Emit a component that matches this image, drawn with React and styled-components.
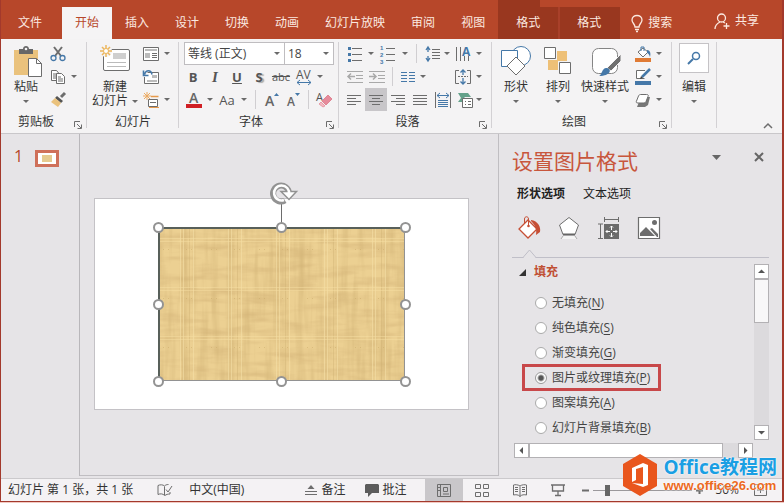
import React, { useState } from "react";
import styled, { createGlobalStyle, css } from "styled-components";

const RED = "#b7472a";
const GREY = "#6d6d6d";
const BLUE = "#4578a8";

const Global = createGlobalStyle`
  *, *::before, *::after { box-sizing: border-box; }
  body {
    margin: 0;
    background: #f3c9c2;
    color: #333;
    font: 12px/16px "Open Sans", "Noto Sans CJK SC", sans-serif;
  }
  button, select, input { font: inherit; color: inherit; margin: 0; }
  button { background: none; border: 0; padding: 0; }
  svg { display: block; flex: none; overflow: visible; }
`;

const Window = styled.div`
  display: flex;
  flex-direction: column;
  min-height: calc(100vh - 1px);
  border: solid #a3392c;
  border-width: 0 2px 1px 1px;
  background: #e6e4e7;
  position: relative;
`;

/* ---------- tab strip ---------- */
const TabBar = styled.nav`
  display: flex;
  align-items: flex-end;
  height: 39px;
  background: ${RED};
  color: #fbe9e0;
`;
const Tab = styled.button`
  height: 32px;
  padding: 0 13px;
  flex: none;
  ${(p) => p.$file && css`padding: 0 20px 0 17px;`}
  ${(p) => p.$active && css`background: #f5f4f5; color: ${RED};`}
`;
const ContextTab = styled.button`
  height: 32px;
  width: ${(p) => p.$w}px;
  background: #99371f;
  border-right: 2px solid ${(p) => (p.$last ? "#99371f" : "#a9402a")};
`;
const ContextGroup = styled.div`
  height: 39px;
  display: flex;
  align-items: flex-end;
  background: linear-gradient(#99371f, #99371f) 0 0 / 42px 7px no-repeat;
`;
const BarAction = styled.button`
  display: flex;
  align-items: center;
  gap: 5px;
  height: 32px;
  margin-left: ${(p) => (p.$end ? "auto" : "11px")};
  margin-right: ${(p) => (p.$end ? "23px" : "0")};
  margin-bottom: ${(p) => (p.$end ? "2px" : "0")};
`;

/* ---------- ribbon ---------- */
const Ribbon = styled.div`
  display: flex;
  background: #f4f3f4;
  border-bottom: 1px solid #c9c7ca;
  height: 95px;
  padding-top: 3px;
`;
const Group = styled.section`
  flex: none;
  width: ${(p) => p.$w}px;
  display: flex;
  flex-direction: column;
  position: relative;
  &::after {
    content: "";
    position: absolute;
    right: 0;
    top: 0;
    height: 86px;
    border-right: 1px solid #d3d1d4;
  }
`;
const GroupBody = styled.div`
  display: flex;
  height: 69px;
  padding-left: ${(p) => p.$pad}px;
`;
const Caption = styled.div`
  display: flex;
  align-items: center;
  height: 24px;
  span { flex: 1; text-align: center; }
`;
const Launcher = styled.button`
  width: 16px;
  height: 16px;
  padding: 5px 0 0 3px;
`;
const Stack = styled.div`
  display: flex;
  flex-direction: column;
`;
const Line = styled.div`
  display: flex;
  align-items: center;
  height: 23px;
`;
const ToolButton = styled.button`
  display: flex;
  align-items: center;
  height: 23px;
  background: ${(p) => (p.$on ? "#c8c6c9" : "transparent")};
`;
const Slot = styled.span`
  width: ${(p) => p.$w}px;
  display: flex;
  justify-content: center;
  color: #555;
`;
const CaretSlot = styled.span`
  width: 8px;
  display: flex;
  justify-content: center;
`;
const BigButton = styled.button`
  width: ${(p) => p.$w}px;
  display: flex;
  flex-direction: column;
  align-items: center;
  padding-top: 3px;
  line-height: 14px;
  white-space: nowrap;
`;
const BigIcon = styled.span`
  height: 35px;
`;
const BigCaption = styled.span`
  display: flex;
  align-items: center;
  justify-content: center;
  gap: 4px;
  height: 14px;
`;
const Divider = styled.span`
  width: ${(p) => p.$w}px;
  height: 19px;
  background: ${(p) =>
    p.$blank ? "none" : "linear-gradient(#d0ced1, #d0ced1) center / 1px 100% no-repeat"};
`;
const Combos = styled.div`
  display: flex;
  height: 23px;
  margin-left: 2px;
`;
const ComboBox = styled.label`
  position: relative;
  width: ${(p) => p.$w}px;
  margin-right: -1px;
  svg { position: absolute; right: 5px; top: 10px; pointer-events: none; }
  select {
    appearance: none;
    width: 100%;
    height: 23px;
    padding: 0 3px;
    border: 1px solid #bfbdc0;
    border-radius: 0;
    background: #fff;
    color: #444;
  }
`;
const Glyph = styled.span`
  font: ${(p) => (p.$italic ? "italic " : "")}${(p) => (p.$light ? 400 : 700)} 13px/16px "Open Sans", sans-serif;
  color: #555;
  ${(p) => p.$italic && css`font-family: "Liberation Serif", serif; font-size: 15px;`}
  ${(p) => p.$u && css`text-decoration: underline;`}
  ${(p) => p.$shadow && css`text-shadow: 2px 1px 1px #aaa;`}
  ${(p) => p.$strike && css`font-size: 11px; font-weight: 400; text-decoration: line-through;`}
`;
const SearchTile = styled.span`
  width: 30px;
  height: 30px;
  margin: -2px 0 0;
  background: #fff;
  border: 1px solid #c5c3c6;
  display: flex;
  align-items: center;
  justify-content: center;
`;
const Collapse = styled.button`
  margin: auto 9px 4px auto;
`;

/* ---------- work area ---------- */
const Work = styled.main`
  flex: 1;
  display: flex;
  padding-bottom: 2px;
`;
const Thumbs = styled.aside`
  width: 79px;
  padding: 14px 0 0 13px;
  border-right: 1px solid #b9b7bb;
  display: flex;
  align-items: flex-start;
  gap: 12px;
  color: ${RED};
  font-size: 16px;
`;
const Thumb = styled.button`
  width: 24px;
  height: 17px;
  margin-top: 2px;
  border: 3px solid #cf705a;
  background: linear-gradient(#e6cb90, #e6cb90) center / 10px 7px no-repeat #fff;
`;
const Canvas = styled.div`
  flex: 1;
  padding: 64px 29px 0 14px;
  border: solid #c0bec2;
  border-width: 0 1px 1px 0;
`;
const Slide = styled.div`
  position: relative;
  aspect-ratio: 375 / 212;
  background: #fff;
  border: 1px solid #c4c2c6;
`;
const Shape = styled.div`
  position: absolute;
  left: 16.8%;
  top: 13.2%;
  width: 66.4%;
  height: 73.6%;
  > svg { width: 100%; height: 100%; overflow: hidden; }
`;
const Frame = styled.span`
  position: absolute;
  inset: 0;
  border: solid;
  border-width: 2px 1px 1px 2px;
  border-color: #58605a #929292 #929292 #58605a;
`;
const Handle = styled.span`
  position: absolute;
  left: ${(p) => p.$x}%;
  top: ${(p) => p.$y}%;
  width: 11px;
  height: 11px;
  margin: -5px 0 0 -5px;
  border: 2px solid #939393;
  border-radius: 50%;
  background: #fff;
`;
const Rotator = styled.span`
  position: absolute;
  left: 50%;
  bottom: 100%;
  margin-left: -12px;
`;

/* ---------- format pane ---------- */
const Pane = styled.aside`
  width: 283px;
  display: flex;
  flex-direction: column;
  padding: 11px 13px 0 13px;
`;
const PaneHead = styled.header`
  display: flex;
  align-items: center;
  height: 32px;
  h2 { margin: 0; flex: 1; font-weight: 400; font-size: 21px; line-height: 32px; color: #c8563c; }
`;
const PaneTools = styled.div`
  display: flex;
  align-items: center;
  gap: 33px;
  padding: 0 5px 8px 0;
`;
const PaneTabs = styled.div`
  display: flex;
  gap: 18px;
  padding: 9px 0 0 5px;
`;
const PaneTab = styled.button`
  line-height: 16px;
  color: #222;
  font-weight: ${(p) => (p.$on ? 700 : 400)};
`;
const IconTabs = styled.div`
  display: flex;
  gap: 16px;
  padding: 14px 0 0 5px;
`;
const CaretLine = styled.div`
  height: 18px;
  padding: 9px 0 0 10px;
  margin-bottom: 6px;
  background: linear-gradient(#c0bfc8, #c0bfc8) bottom / 100% 1px no-repeat;
`;
const PaneScroll = styled.div`
  display: grid;
  grid-template-columns: 1fr 15px;
  row-gap: 3px;
`;
const Options = styled.div`
  height: 176px;
  overflow: hidden;
`;
const SectionTitle = styled.button`
  display: flex;
  align-items: center;
  gap: 8px;
  height: 16px;
  margin: 0 0 10px 7px;
  color: #c04f34;
  font-weight: 700;
`;
const Option = styled.label`
  display: flex;
  align-items: center;
  gap: 5px;
  width: max-content;
  height: 25px;
  padding: 0 10px 0 20px;
  margin-left: 3px;
  color: #444;
  ${(p) => p.$marked && css`
    height: 27px;
    margin: -1px 0 -1px 10px;
    padding: 0 8px 0 10px;
    border: 3px solid #c8484a;
  `}
  u { text-underline-offset: 2px; }
`;
const Radio = styled.input`
  appearance: none;
  width: 12px;
  height: 12px;
  border: 1px solid #aaa;
  border-radius: 50%;
  background: #fff;
  &:checked { background: radial-gradient(circle, #555 0 2px, #fff 4px); border-color: #999; }
`;
const Scrollbar = styled.div`
  display: flex;
  flex-direction: ${(p) => (p.$row ? "row" : "column")};
  background: #dcdadd;
  ${(p) => p.$row && css`margin: 0 1px 0 2px;`}
`;
const ScrollButton = styled.button`
  flex: none;
  width: 15px;
  height: 15px;
  display: flex;
  align-items: center;
  justify-content: center;
  background: #fff;
  border: 1px solid #b3b1b4;
`;
const ScrollThumb = styled.span`
  ${(p) => (p.$row ? css`width: 81%; height: 15px; background: #fff;` : css`height: 44px; background: #f8f7f8;`)}
  border: 1px solid #b3b1b4;
  margin-right: ${(p) => (p.$row ? "auto" : "0")};
  margin-bottom: ${(p) => (p.$row ? "0" : "auto")};
`;

/* ---------- status bar ---------- */
const Status = styled.footer`
  display: flex;
  align-items: center;
  height: 23px;
  background: #f4f2f4;
  border-top: 1px solid #cbc9cc;
  padding-left: 7px;
  color: #333;
  white-space: nowrap;
`;
const StatusButton = styled.button`
  flex: none;
  display: flex;
  align-items: center;
  gap: ${(p) => p.$gap || 4}px;
  margin-left: ${(p) => p.$ml || 0}px;
`;
const Views = styled.div`
  flex: none;
  display: flex;
  margin-left: 19px;
`;
const ViewButton = styled.button`
  width: 38px;
  height: 22px;
  display: flex;
  align-items: center;
  justify-content: center;
  background: ${(p) => (p.$on ? "#c9c7ca" : "transparent")};
`;
const Range = styled.input`
  appearance: none;
  flex: 1;
  min-width: 40px;
  width: 0;
  height: 12px;
  margin: 0 4px;
  background: linear-gradient(#9b999c, #9b999c) center / 100% 1px no-repeat;
  &::-webkit-slider-thumb { appearance: none; width: 5px; height: 11px; background: #666; }
`;
const Zoom = styled.div`
  flex: 1;
  display: flex;
  align-items: center;
  padding: 0 15px 0 5px;
`;
const Badge = styled.a`
  position: absolute;
  right: 5px;
  bottom: 4px;
  display: flex;
  align-items: center;
  gap: 5px;
  text-decoration: none;
`;
const BadgeText = styled.span`
  display: flex;
  flex-direction: column;
  font-weight: 700;
  text-shadow: 0 0 2px #fff, 0 0 1px #fff;
  white-space: nowrap;
`;
const BadgeName = styled.span`
  font-size: 19px;
  line-height: 22px;
  color: #1b9fe3;
`;
const BadgeUrl = styled.span`
  font: 700 13px/16px "Liberation Sans", sans-serif;
  color: #ec6a1e;
`;

/* ---------- icons ---------- */
const Svg = ({ w = 16, h = 16, children, ...r }) => (
  <svg width={w} height={h} viewBox={`0 0 ${w} ${h}`} fill="none" stroke={GREY} aria-hidden="true" {...r}>
    {children}
  </svg>
);
const Caret = () => <Svg w={6} h={3}><path d="M0 0h6L3 3z" fill="#6a6a6a" stroke="none" /></Svg>;
const Tri = ({ dir }) => {
  const d = { up: "M1 6h7L4.500 2.500z", down: "M1 3h7L4.500 6.500z", left: "M6 1v7L2.500 4.500z", right: "M3 1v7L6.500 4.500z" };
  return <Svg w={9} h={9}><path d={d[dir]} fill="#555" stroke="none" /></Svg>;
};
const LaunchIcon = () => <Svg w={8} h={8}><path d="M.5 6V.5H6M3 3l4 4M7.500 3.500v4h-4" /></Svg>;

const PasteIcon = () => (
  <Svg w={32} h={32}>
    <path d="M4 5h24v25H4z" fill="#eac27d" stroke="none" />
    <path d="M9 4h4c0-4 6-4 6 0h4v5H9z" fill="#676767" stroke="none" />
    <circle cx="16" cy="4" r="1.300" fill="#f4f3f4" stroke="none" />
    <path d="M18.500 13.500h8l5 5v13h-13z" fill="#fff" />
    <path d="M26.500 13.500v5h5" />
  </Svg>
);
const CutIcon = () => (
  <Svg>
    <path d="M4 1l7 9M12 1L5 10" strokeWidth="2" />
    <circle cx="3.500" cy="12" r="2.500" stroke={BLUE} strokeWidth="1.300" />
    <circle cx="12.500" cy="12" r="2.500" stroke={BLUE} strokeWidth="1.300" />
  </Svg>
);
const CopyIcon = () => (
  <Svg>
    <path d="M1.500 1.500h5l2.500 3v7H1.500zM3 5h4M3 7h3M3 9h3" fill="#fff" />
    <path d="M6.500 4.500h5l3 3v7h-8zM8 8h3M8 10h5M8 12h5" fill="#fff" />
  </Svg>
);
const BrushIcon = () => (
  <Svg>
    <path d="M15 1l-4 4" strokeWidth="3" />
    <path d="M7 4l6 5-2 2-6-5z" fill="#555" stroke="none" />
    <path d="M5 6l6 5-3 4-7-5z" fill="#eac27d" stroke="none" />
  </Svg>
);
const NewSlideIcon = () => (
  <Svg w={32} h={32}>
    <rect x="4.500" y="4.500" width="26" height="21" rx="1.500" fill="#fff" />
    <path d="M14 8h13v6H14z" fill="#cfcfcf" stroke="none" />
    <path d="M8 17.500h19M8 21.500h19" stroke="#bbb" />
    <circle cx="7" cy="6" r="6" fill="#f4f3f4" stroke="none" />
    <path d="M7 0v12M1 6h12M3 2l8 8M11 2l-8 8" stroke="#ecb65c" strokeWidth="1.500" />
    <circle cx="7" cy="6" r="2.500" fill="#fff" stroke="#ecb65c" />
  </Svg>
);
const LayoutIcon = () => (
  <Svg>
    <path d="M.5 1.500h15v13H.5z" fill="#fff" />
    <path d="M2 3h12v2H2zM2 7h5v5H2z" fill="#bbb" stroke="none" />
    <path d="M9 7.500h5M9 9.500h5M9 11.500h5" />
  </Svg>
);
const ResetIcon = () => (
  <Svg>
    <path d="M4.500 3.500h11v11h-14V8" fill="#fff" />
    <path d="M9 6h5v3H9zM4 11h10v2H4z" fill="#bbb" stroke="none" />
    <path d="M1.500 5.500C3 .5 8 .5 9 5.500M.5 1.500v5h5" stroke={BLUE} strokeWidth="1.600" />
  </Svg>
);
const SectionIcon = () => (
  <Svg>
    <path d="M8 4.500h7.500" stroke="#e79a4c" strokeWidth="1.500" />
    <path d="M5.500 7.500h9v7h-9zM7 10.500h6" fill="#fff" />
    <path d="M4 0v8M0 4h8M1 1l6 6M7 1L1 7" stroke="#eba960" />
    <path d="M6 15.500h10" stroke="#e79a4c" />
  </Svg>
);
const SpacingIcon = () => (
  <Svg w={16} h={18}>
    <text x="0" y="11" fontSize="12" fill="#555" stroke="none" fontFamily="Open Sans">AV</text>
    <path d="M1 14.500h14M4 12l-3 2.500 3 2.500M12 12l3 2.500-3 2.500" stroke={BLUE} />
  </Svg>
);
const FontColorIcon = () => (
  <Svg w={16} h={18}>
    <text x="3" y="12" fontSize="14" fontWeight="600" fill="#666" stroke="none" fontFamily="Open Sans">A</text>
    <path d="M0 13h16v4H0z" fill="#d01f24" stroke="none" />
  </Svg>
);
const GrowIcon = ({ down }) => (
  <Svg w={16} h={18}>
    <text x={down ? 2 : 1} y="15" fontSize={down ? 12 : 14} fontWeight="600" fill="#666" stroke="none" fontFamily="Open Sans">A</text>
    <path d={down ? "M10 2h5l-2.500 3z" : "M10 5h5l-2.500-3z"} fill={BLUE} stroke="none" />
  </Svg>
);
const ClearIcon = () => (
  <Svg w={16} h={18}>
    <text x="0" y="10" fontSize="11" fill="#555" stroke="none" fontFamily="Open Sans">A</text>
    <path d="M12 4l4 4-6 6-4-4z" fill="#e68b9b" stroke="#e08594" />
    <path d="M5 11l4 4-2 1-4-3z" fill="#f5b9c2" stroke="#e08594" strokeWidth=".7" />
  </Svg>
);
const BulletIcon = () => (
  <Svg>
    <path d="M5 2.500h10M5 8.500h10M5 14.500h10" />
    <path d="M1 1h3v3H1zM1 7h3v3H1zM1 13h3v3H1z" fill={BLUE} stroke="none" />
  </Svg>
);
const NumberIcon = () => (
  <Svg>
    <path d="M6 2.500h9M6 8.500h9M6 14.500h9" />
    <g fill={BLUE} stroke="none" fontSize="6" fontWeight="700" fontFamily="Liberation Sans">
      <text x="0" y="4">1</text><text x="0" y="11">2</text><text x="0" y="18">3</text>
    </g>
  </Svg>
);
const LineSpaceIcon = () => (
  <Svg>
    <path d="M7 3.500h8M7 6.500h8M7 9.500h8M7 12.500h8" />
    <path d="M3 1v5M1 4l2-3 2 3M3 10v5M1 12l2 3 2-3" stroke={BLUE} strokeWidth="1.300" />
  </Svg>
);
const TextDirIcon = () => (
  <Svg>
    <path d="M1.500 1v14M5.500 1v14M9.500 10v5M13.500 10v5" />
    <text x="7" y="10" fontSize="12" fontWeight="700" fill={BLUE} stroke="none" fontFamily="Open Sans">A</text>
  </Svg>
);
const AlignTextIcon = () => (
  <Svg>
    <path d="M4 1.500H.5v13H4M12 1.500h3.500v13H12" />
    <path d="M3 7.500h10" strokeDasharray="2 1" />
    <path d="M8 1v5M5.500 3.500L8 1l2.500 2.500M8 9v6M5.500 12.500L8 15l2.500-2.500" stroke={BLUE} strokeWidth="1.300" />
  </Svg>
);
const IndentIcon = ({ inc }) => (
  <Svg stroke="#a9a9a9">
    <path d="M0 2.500h16M9 6.500h7M9 9.500h7M0 13.500h16" />
    <path d={inc ? "M0 7.500h7M4 4.500l3 3-3 3" : "M8 7.500H1M4 4.500l-3 3 3 3"} strokeWidth="1.500" />
  </Svg>
);
const ColumnsIcon = () => (
  <Svg w={14} h={14} stroke={BLUE}>
    <path d="M0 2.500h6M8 2.500h6M0 5.500h6M8 5.500h6M0 8.500h6M8 8.500h6M0 11.500h6M8 11.500h6" />
  </Svg>
);
const ALIGN = {
  left: "M1 6.500h9M1 12.500h9",
  center: "M4 6.500h8M4 12.500h8",
  right: "M6 6.500h9M6 12.500h9",
  full: "M1 6.500h14M1 12.500h14",
};
const AlignIcon = ({ kind }) => <Svg><path d={`M1 3.500h14M1 9.500h14${ALIGN[kind]}`} /></Svg>;
const DistributeIcon = () => (
  <Svg w={16} h={18}>
    <path d="M.5 1v16M15.500 1v16" />
    <path d="M2 4.500h12M5 2L2 4.500 5 7M11 2l3 2.500L11 7" stroke={BLUE} />
    <path d="M3 9.500h10M3 11.500h10M3 13.500h10M3 15.500h10" stroke={BLUE} />
  </Svg>
);
const SmartArtIcon = () => (
  <Svg w={17} h={18}>
    <path d="M1 2h10l3 4H8L6 8v3H1l3-4z" fill="#64a28b" stroke="none" />
    <path d="M5.500 7.500h10v9h-10zM8 10.500h1M11 10.500h3M8 13.500h1M11 13.500h3" fill="#fff" />
  </Svg>
);
const ShapesIcon = () => (
  <Svg w={32} h={32} stroke={BLUE}>
    <circle cx="21" cy="11" r="9.500" fill="#fff" />
    <path d="M1.500 5.500h16v16h-16z" fill="#fff" />
    <path d="M16 12l9 9-9 9-9-9z" fill="#fff" stroke={GREY} />
  </Svg>
);
const ArrangeIcon = () => (
  <Svg w={32} h={32}>
    <path d="M15 6h10v10H15zM6 15h10v10H6z" fill="#eec077" stroke="none" />
    <path d="M2.500 2.500h11v11h-11zM17.500 17.500h11v11h-11z" fill="#fff" />
  </Svg>
);
const StylesIcon = () => (
  <Svg w={32} h={32}>
    <rect x="3.500" y="3.500" width="25" height="25" rx="6" fill="#fff" stroke="#858585" />
    <path d="M32 9v7L22 26l-4-3z" fill="#6f6f6f" stroke="#f4f3f4" />
    <path d="M10 31c3-1 3-9 8-8s4 8-8 8z" fill={BLUE} stroke="none" />
  </Svg>
);
const FillIcon = () => (
  <Svg>
    <path d="M8 2l5 4-5 5-5-5z" fill="#fff" />
    <path d="M6 5V1h3v4" stroke={BLUE} />
    <path d="M12 4c3 0 4 3 3 7-1-3-2-4-3-4z" fill={BLUE} stroke="none" />
    <path d="M0 12h16v4H0z" fill="#e07b35" stroke="none" />
  </Svg>
);
const OutlineIcon = () => (
  <Svg>
    <path d="M10 1.500H1.500v8h8" fill="#fff" />
    <path d="M15 0l-8 8" stroke={BLUE} strokeWidth="2.500" />
    <path d="M5 10l1-3 2 2z" fill="#444" stroke="none" />
    <path d="M0 12h16v4H0z" fill={BLUE} stroke="none" />
  </Svg>
);
const EffectIcon = () => (
  <Svg>
    <path d="M6 5h9l-2 8-3 2H2z" fill="#777" stroke="none" />
    <path d="M5.500 2.500h6c2 0 2 1 1.500 2l-2 5c-.5 1-1 1.500-2 1.500H3C1 11 1 10 1.500 9l2-5c.5-1 1-1.500 2-1.500z" fill="#fff" />
  </Svg>
);
const SearchIcon = () => (
  <Svg w={14} h={14} stroke={BLUE}><circle cx="9" cy="5" r="3.500" strokeWidth="1.500" /><path d="M6 8l-5 5" strokeWidth="2" /></Svg>
);
const BulbIcon = () => (
  <Svg w={12} h={17} stroke="#fbe9e0">
    <path d="M4 12c0-3-3-4-3-7 0-6 10-6 10 0 0 3-3 4-3 7zM4 14.500h4M5 16.500h2" strokeWidth="1.300" />
  </Svg>
);
const ShareIcon = () => (
  <Svg w={16} h={17} stroke="#fbe9e0" strokeWidth="1.300">
    <circle cx="7.500" cy="5" r="4" /><path d="M1 16c0-4 3-6 5-7M9 9l2 1M12.500 10v6M9.500 13h6" />
  </Svg>
);
const PaneFill = () => (
  <Svg w={24} h={24}>
    <path d="M11 4l9 9-9 9-9-9z" fill="#fff" stroke="#c64f35" strokeWidth="1.300" />
    <path d="M7.500 8V3c0-3 4-3 4 0v7" stroke="#c64f35" />
    <circle cx="11.500" cy="10" r="1.300" fill="#c64f35" stroke="none" />
    <path d="M14 4c7 1 10 7 9 12l-4 3c1-6-1-10-5-14z" fill="#c64f35" stroke="none" />
  </Svg>
);
const PaneEffects = () => (
  <Svg w={24} h={24}>
    <path d="M12 1.500l9.500 7.500L18 18.500H6L2.500 9z" fill="#fff" />
    <path d="M6 18.500h12" stroke="#666" strokeWidth="2" />
    <path d="M6 20l-2 3h16l-2-3z" fill="#f4f4f4" stroke="none" />
    <path d="M6 20l-2 3M18 20l2 3" stroke="#aaa" />
  </Svg>
);
const PaneSize = () => (
  <Svg w={24} h={24}>
    <path d="M7 8h15v15H7z" fill="#6b6b6b" stroke="none" />
    <path d="M7.500 3.500h14M7.500 1v5M21.500 1v5M3.500 8v14.500M1 8h5M1 22.500h5" />
    <path d="M14.500 10v4M14.500 17v4M9 15.500h4M16 15.500h4M13 11.500l1.500-1.500 1.500 1.500M13 19.500l1.500 1.500 1.500-1.500M10.500 14L9 15.500l1.500 1.500M18.500 14l1.500 1.500-1.500 1.500" stroke="#fff" />
  </Svg>
);
const PanePicture = () => (
  <Svg w={24} h={24}>
    <path d="M1.500 1.500h21v21h-21z" fill="#fff" strokeWidth="1.200" />
    <circle cx="17.500" cy="6.500" r="2.500" fill={GREY} stroke="none" />
    <path d="M3 20v-3l6-6 9 9zM13 13l2-1 6 6v3h-1z" fill={GREY} stroke="none" />
  </Svg>
);

/* Woven papyrus fill: a repeating 48px tile of faint crossing fibres on tan. */
const Papyrus = () => (
  <svg aria-hidden="true">
    <defs>
      <filter id="warp" x="0" y="0" width="100%" height="100%" colorInterpolationFilters="sRGB">
        <feTurbulence type="fractalNoise" baseFrequency="0.13 0.012" numOctaves="3" seed="4" />
        <feColorMatrix values="0 0 0 0 0.82  0 0 0 0 0.7  0 0 0 0 0.46  1.400 0 0 0 -0.580" />
      </filter>
      <filter id="weft" x="0" y="0" width="100%" height="100%" colorInterpolationFilters="sRGB">
        <feTurbulence type="fractalNoise" baseFrequency="0.025 0.13" numOctaves="3" seed="9" />
        <feColorMatrix values="0 0 0 0 0.82  0 0 0 0 0.69  0 0 0 0 0.46  1.200 0 0 0 -0.500" />
      </filter>
      <pattern id="weave" width="48" height="49" patternUnits="userSpaceOnUse">
        <path d="M22.500 0v49M25.500 0v49M35.500 0v49" stroke="#f5dfa6" strokeOpacity=".6" />
        <path d="M31.500 0v49" stroke="#cdae70" strokeOpacity=".4" />
        <path d="M0 11.500h48M0 14.500h48" stroke="#f5dda2" strokeOpacity=".5" />
        <path d="M5 22.500h9M28 22.500h10" stroke="#c9a968" strokeOpacity=".5" strokeDasharray="1 4" />
      </pattern>
    </defs>
    <rect width="100%" height="100%" fill="#ecd092" />
    <rect width="100%" height="100%" filter="url(#weft)" />
    <rect width="100%" height="100%" filter="url(#warp)" />
    <rect width="100%" height="100%" fill="url(#weave)" />
  </svg>
);

/* ---------- composed controls ---------- */
const Tool = ({ label, w, caret, on, children }) => (
  <ToolButton type="button" aria-label={label} $on={on}>
    <Slot $w={w}>{children}</Slot>
    {caret && <CaretSlot><Caret /></CaretSlot>}
  </ToolButton>
);
const RibbonGroup = ({ w, pad, title, launcher, children }) => (
  <Group $w={w}>
    <GroupBody $pad={pad}>{children}</GroupBody>
    {title && (
      <Caption>
        <span>{title}</span>
        {launcher && <Launcher type="button" aria-label={`${title}设置`}><LaunchIcon /></Launcher>}
      </Caption>
    )}
  </Group>
);
const Big = ({ w, icon, label, second }) => (
  <BigButton type="button" $w={w}>
    <BigIcon>{icon}</BigIcon>
    <span>{label}</span>
    <BigCaption>{second}<Caret /></BigCaption>
  </BigButton>
);

const TABS = ["文件", "开始", "插入", "设计", "切换", "动画", "幻灯片放映", "审阅", "视图"];
const FILLS = [
  ["无填充", "N"], ["纯色填充", "S"], ["渐变填充", "G"],
  ["图片或纹理填充", "P"], ["图案填充", "A"], ["幻灯片背景填充", "B"],
];
const HANDLES = [[0, 0], [50, 0], [100, 0], [0, 50], [100, 50], [0, 100], [50, 100], [100, 100]];

export default function App() {
  const [fill, setFill] = useState("P");
  const [zoom, setZoom] = useState(12);
  return (
    <>
      <Global />
      <Window>
        <TabBar>
          {TABS.map((t, i) => <Tab key={t} type="button" $file={i === 0} $active={i === 1}>{t}</Tab>)}
          <ContextGroup>
            <ContextTab type="button" $w={62}>格式</ContextTab>
            <ContextTab type="button" $w={60} $last>格式</ContextTab>
          </ContextGroup>
          <BarAction type="button"><BulbIcon />搜索</BarAction>
          <BarAction type="button" $end><ShareIcon />共享</BarAction>
        </TabBar>

        <Ribbon>
          <RibbonGroup w={86} pad={5} title="剪贴板" launcher>
            <Big w={40} icon={<PasteIcon />} label="粘贴" />
            <Stack>
              <Tool label="剪切" w={24}><CutIcon /></Tool>
              <Tool label="复制" w={24} caret><CopyIcon /></Tool>
              <Tool label="格式刷" w={24}><BrushIcon /></Tool>
            </Stack>
          </RibbonGroup>

          <RibbonGroup w={92} pad={4} title="幻灯片">
            <Big w={48} icon={<NewSlideIcon />} label="新建" second="幻灯片" />
            <Stack>
              <Tool label="版式" w={24} caret><LayoutIcon /></Tool>
              <Tool label="重置" w={24}><ResetIcon /></Tool>
              <Tool label="节" w={24} caret><SectionIcon /></Tool>
            </Stack>
          </RibbonGroup>

          <RibbonGroup w={160} pad={3} title="字体" launcher>
            <Stack>
              <Combos>
                <ComboBox $w={101}><select aria-label="字体"><option>等线 (正文)</option></select><Caret /></ComboBox>
                <ComboBox $w={50}><select aria-label="字号"><option>18</option></select><Caret /></ComboBox>
              </Combos>
              <Line>
                <Tool label="加粗" w={22}><Glyph>B</Glyph></Tool>
                <Tool label="倾斜" w={22}><Glyph $italic>I</Glyph></Tool>
                <Tool label="下划线" w={22}><Glyph $u>U</Glyph></Tool>
                <Tool label="阴影" w={22}><Glyph $shadow>S</Glyph></Tool>
                <Tool label="删除线" w={22}><Glyph $strike>abc</Glyph></Tool>
                <Tool label="字符间距" w={24} caret><SpacingIcon /></Tool>
              </Line>
              <Line>
                <Tool label="字体颜色" w={24} caret><FontColorIcon /></Tool>
                <Tool label="更改大小写" w={26} caret><Glyph $light>Aa</Glyph></Tool>
                <Divider $w={15} />
                <Tool label="增大字号" w={18}><GrowIcon /></Tool>
                <Tool label="减小字号" w={24}><GrowIcon down /></Tool>
                <Divider $w={6} />
                <Tool label="清除格式" w={26}><ClearIcon /></Tool>
              </Line>
            </Stack>
          </RibbonGroup>

          <RibbonGroup w={153} pad={4} title="段落" launcher>
            <Stack>
              <Line>
                <Tool label="项目符号" w={24} caret><BulletIcon /></Tool>
                <Tool label="编号" w={26} caret><NumberIcon /></Tool>
                <Divider $w={14} />
                <Tool label="行距" w={20} caret><LineSpaceIcon /></Tool>
                <Tool label="文字方向" w={24} caret><TextDirIcon /></Tool>
              </Line>
              <Line>
                <Tool label="降低列表级别" w={24}><IndentIcon /></Tool>
                <Tool label="提高列表级别" w={20}><IndentIcon inc /></Tool>
                <Divider $w={10} />
                <Tool label="分栏" w={22} caret><ColumnsIcon /></Tool>
                <Divider $w={24} $blank />
                <Tool label="对齐文本" w={24} caret><AlignTextIcon /></Tool>
              </Line>
              <Line>
                <Tool label="左对齐" w={22}><AlignIcon kind="left" /></Tool>
                <Tool label="居中" w={22} on><AlignIcon kind="center" /></Tool>
                <Tool label="右对齐" w={22}><AlignIcon kind="right" /></Tool>
                <Tool label="两端对齐" w={22}><AlignIcon kind="full" /></Tool>
                <Tool label="分散对齐" w={24}><DistributeIcon /></Tool>
                <Tool label="转换为 SmartArt" w={20} caret><SmartArtIcon /></Tool>
              </Line>
            </Stack>
          </RibbonGroup>

          <RibbonGroup w={180} pad={3} title="绘图" launcher>
            <Big w={42} icon={<ShapesIcon />} label="形状" />
            <Big w={42} icon={<ArrangeIcon />} label="排列" />
            <Big w={52} icon={<StylesIcon />} label="快速样式" />
            <Stack>
              <Tool label="形状填充" w={24} caret><FillIcon /></Tool>
              <Tool label="形状轮廓" w={24} caret><OutlineIcon /></Tool>
              <Tool label="形状效果" w={24} caret><EffectIcon /></Tool>
            </Stack>
          </RibbonGroup>

          <RibbonGroup w={45} pad={0}>
            <Big w={44} icon={<SearchTile><SearchIcon /></SearchTile>} label="编辑" />
          </RibbonGroup>
          <Collapse type="button" aria-label="折叠功能区">
            <Svg w={10} h={7}><path d="M1 6l4-4 4 4" strokeWidth="1.500" /></Svg>
          </Collapse>
        </Ribbon>

        <Work>
          <Thumbs>
            <span>1</span>
            <Thumb type="button" aria-label="幻灯片 1" />
          </Thumbs>
          <Canvas>
            <Slide>
              <Shape>
                <Papyrus />
                <Frame />
                <Rotator>
                  <Svg w={28} h={46}>
                    <path d="M12.500 22v24" />
                    <path d="M16 19.500A8 8 0 1 1 20 12" stroke="#929292" strokeWidth="6" />
                    <path d="M12 10.500h15.500L20 18.500z" fill="#fff" stroke="#929292" strokeWidth="1.500" />
                    <path d="M15 19A7.500 7.500 0 1 1 20 13" stroke="#fff" strokeWidth="2.500" />
                  </Svg>
                </Rotator>
                {HANDLES.map(([x, y]) => <Handle key={`${x}-${y}`} $x={x} $y={y} />)}
              </Shape>
            </Slide>
          </Canvas>

          <Pane>
            <PaneHead>
              <h2>设置图片格式</h2>
              <PaneTools>
                <button type="button" aria-label="窗格选项"><Svg w={9} h={5}><path d="M0 0h9L4.500 5z" fill="#666" stroke="none" /></Svg></button>
                <button type="button" aria-label="关闭"><Svg w={10} h={10} stroke="#666"><path d="M1 1l8 8M9 1L1 9" strokeWidth="2" /></Svg></button>
              </PaneTools>
            </PaneHead>
            <PaneTabs>
              <PaneTab type="button" $on>形状选项</PaneTab>
              <PaneTab type="button">文本选项</PaneTab>
            </PaneTabs>
            <IconTabs>
              <button type="button" aria-label="填充与线条"><PaneFill /></button>
              <button type="button" aria-label="效果"><PaneEffects /></button>
              <button type="button" aria-label="大小与属性"><PaneSize /></button>
              <button type="button" aria-label="图片"><PanePicture /></button>
            </IconTabs>
            <CaretLine>
              <Svg w={15} h={9}><path d="M1 8.500L7.500 1 14 8.500" fill="#e6e4e7" stroke="#c0bfc8" /><path d="M2 8.500h11" stroke="#e6e4e7" /></Svg>
            </CaretLine>
            <PaneScroll>
              <Options>
                <SectionTitle type="button">
                  <Svg w={7} h={7}><path d="M7 0v7H0z" fill="#333" stroke="none" /></Svg>填充
                </SectionTitle>
                {FILLS.map(([name, k]) => (
                  <Option key={k} $marked={k === "P"}>
                    <Radio type="radio" name="fill" checked={fill === k} onChange={() => setFill(k)} />
                    <span>{name}(<u>{k}</u>)</span>
                  </Option>
                ))}
              </Options>
              <Scrollbar>
                <ScrollButton type="button" aria-label="向上"><Tri dir="up" /></ScrollButton>
                <ScrollThumb />
                <ScrollButton type="button" aria-label="向下"><Tri dir="down" /></ScrollButton>
              </Scrollbar>
              <Scrollbar $row>
                <ScrollButton type="button" aria-label="向左"><Tri dir="left" /></ScrollButton>
                <ScrollThumb $row />
                <ScrollButton type="button" aria-label="向右"><Tri dir="right" /></ScrollButton>
              </Scrollbar>
            </PaneScroll>
          </Pane>
        </Work>

        <Status>
          <span>幻灯片 第 1 张，共 1 张</span>
          <StatusButton type="button" $ml={24} aria-label="拼写检查">
            <Svg w={16} h={13}><path d="M7.500 2.500v9M7.500 2C6 .5 3 .5 1 1.500v9c2-1 5-1 6.500 1M7.500 2c1-1 2-1.500 4-1.500M8 11.500c1-1 3-1.500 5-1.500V8M9 5.500l2 2.500 4-6" /></Svg>
          </StatusButton>
          <StatusButton type="button" $ml={16}>中文(中国)</StatusButton>
          <StatusButton type="button" $ml={61}>
            <Svg w={12} h={12}><path d="M0 7.500h12M0 10.500h12" /><path d="M2.500 5h7L6 1z" fill={GREY} stroke="none" /></Svg>备注
          </StatusButton>
          <StatusButton type="button" $ml={20} $gap={3}>
            <Svg w={14} h={13}><path d="M1 0h12l1 1v8H7l-4 4V9H0V1z" fill="#5c5c5c" stroke="none" /></Svg>批注
          </StatusButton>
          <Views>
            <ViewButton type="button" aria-label="普通视图" $on>
              <Svg w={14} h={13}><path d="M.5.5h13v12H.5zM3.500.5v12M6.500 3.500h4v4h-4zM6 10h6M1 3.500h2M1 6.500h2" /></Svg>
            </ViewButton>
            <ViewButton type="button" aria-label="幻灯片浏览">
              <Svg w={15} h={13}><path d="M.5.5h5v4h-5zM8.500.5h5v4h-5zM.5 8.500h5v4h-5zM8.500 8.500h5v4h-5z" /></Svg>
            </ViewButton>
            <ViewButton type="button" aria-label="阅读视图">
              <Svg w={14} h={13}><path d="M7 2.500v10M7 2C5 .5 2 .5.500 1v10c2-.5 5-.5 6.500 1.500M7 2C9 .5 12 .5 13.500 1v10c-2-.5-5-.5-6.500 1.500M2 3.500h3M2 5.500h3M2 7.500h3M9 3.500h3M9 5.500h3M9 7.500h3" /></Svg>
            </ViewButton>
            <ViewButton type="button" aria-label="幻灯片放映">
              <Svg w={14} h={13}><path d="M0 1h14M1.500 1v6h11V1M7 7v4M4 11.500h6" strokeWidth="1.300" /></Svg>
            </ViewButton>
          </Views>
          <Zoom>
            <button type="button" aria-label="缩小"><Svg w={7} h={3}><path d="M0 1.500h7" strokeWidth="2" /></Svg></button>
            <Range type="range" aria-label="显示比例" min="0" max="100" value={zoom} onChange={(e) => setZoom(e.target.value)} />
            <StatusButton type="button" aria-label="放大"><Svg w={7} h={7}><path d="M0 3.500h7M3.500 0v7" strokeWidth="2" /></Svg></StatusButton>
            <StatusButton type="button" $ml={12}>50%</StatusButton>
            <StatusButton type="button" $ml={15} aria-label="适应窗口"><Svg w={13} h={12}><path d="M.5.500h12v11H.5zM6.500 3v6M3 6h7" /></Svg></StatusButton>
          </Zoom>
        </Status>

        <Badge href="#office26">
          <Svg w={36} h={44}>
            <path d="M18 1l17 10v22L18 43 1 33V11z" fill="#e9561d" stroke="none" />
            <path d="M10 15l11-5 5 2v20l-5 2-11-4 11 1V14l-7 2v11l-4 2z" fill="#fff" stroke="none" />
          </Svg>
          <BadgeText>
            <BadgeName>Office教程网</BadgeName>
            <BadgeUrl>www.office26.com</BadgeUrl>
          </BadgeText>
        </Badge>
      </Window>
    </>
  );
}
